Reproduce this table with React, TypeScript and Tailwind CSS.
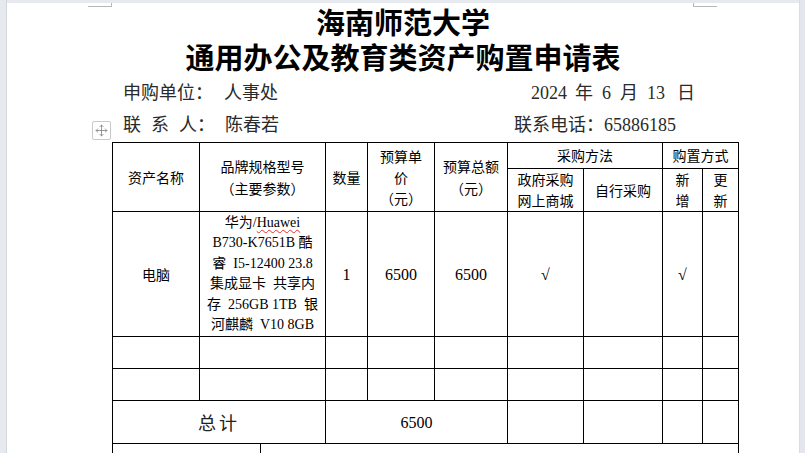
import { Move } from 'lucide-react'

const CJK = { fontFamily: '"Noto Sans CJK SC", sans-serif' }
const MIX = { fontFamily: '"Liberation Serif", "Noto Sans CJK SC", serif' }

const cell = 'border border-black p-0 text-center align-middle'

export default function App() {
  return (
    <div className="w-[805px] h-[453px] overflow-hidden bg-[#e6e9ed] flex text-black">
      <div className="w-[7px] shrink-0 border-r border-[#d3d6da]" />

      {/* page */}
      <div className="relative mt-[3px] w-[792px] shrink-0 bg-white">
        {/* corner marks */}
        <div className="absolute left-[81px] top-[3px] w-[24px] h-[1px] bg-[#b7b7b7]" />
        <div className="absolute left-[104px] top-0 w-[1px] h-[4px] bg-[#b7b7b7]" />
        <div className="absolute left-[686px] top-[3px] w-[24px] h-[1px] bg-[#b7b7b7]" />
        <div className="absolute left-[686px] top-0 w-[1px] h-[4px] bg-[#b7b7b7]" />

        {/* table move handle */}
        <div className="absolute left-[85px] top-[118px] w-[19px] h-[19px] border border-[#c9c9c9] rounded-[2px] bg-white flex items-center justify-center">
          <Move size={13} strokeWidth={1.4} className="text-[#7a7a7a]" />
        </div>

        {/* title */}
        <div className="pt-[1px] text-center font-bold text-[29px] leading-[35px]" style={CJK}>
          <div>海南师范大学</div>
          <div>通用办公及教育类资产购置申请表</div>
        </div>

        {/* info rows */}
        <div className="mt-[3px] pl-[116px] text-[18px] leading-[32px] text-[#2a2a2a]" style={MIX}>
          <div className="flex">
            <div className="w-[408px] shrink-0 flex">
              <span>申购单位：</span>
              <span className="ml-[11px]">人事处</span>
            </div>
            <div className="flex">
              <span>2024</span>
              <span className="ml-[8px]">年</span>
              <span className="ml-[9px]">6</span>
              <span className="ml-[9px]">月</span>
              <span className="ml-[9px]">13</span>
              <span className="ml-[12px]">日</span>
            </div>
          </div>
          <div className="flex">
            <div className="w-[391px] shrink-0 flex">
              <span className="mr-[10px]">联</span>
              <span className="mr-[10px]">系</span>
              <span>人：</span>
              <span className="ml-[10px]">陈春若</span>
            </div>
            <div>联系电话：65886185</div>
          </div>
        </div>

        {/* table */}
        <div className="mt-[1px] ml-[105px]">
          <table className="table-fixed border-collapse w-[627px] text-[14px] leading-[21px]" style={CJK}>
            <colgroup>
              <col className="w-[87px]" />
              <col className="w-[126px]" />
              <col className="w-[42px]" />
              <col className="w-[67px]" />
              <col className="w-[73px]" />
              <col className="w-[76px]" />
              <col className="w-[79px]" />
              <col className="w-[40px]" />
              <col className="w-[36px]" />
            </colgroup>
            <tbody>
              <tr className="h-[26px]">
                <td rowSpan={2} className={cell}>资产名称</td>
                <td rowSpan={2} className={`${cell} leading-[22px]`}>
                  品牌规格型号
                  <br />
                  （主要参数）
                </td>
                <td rowSpan={2} className={cell}>数量</td>
                <td rowSpan={2} className={cell}>
                  预算单
                  <br />
                  价
                  <br />
                  （元）
                </td>
                <td rowSpan={2} className={`${cell} leading-[22px]`}>
                  预算总额
                  <br />
                  （元）
                </td>
                <td colSpan={2} className={cell}>采购方法</td>
                <td colSpan={2} className={cell}>购置方式</td>
              </tr>
              <tr className="h-[43px]">
                <td className={cell}>
                  政府采购
                  <br />
                  网上商城
                </td>
                <td className={cell}>自行采购</td>
                <td className={cell}>
                  新
                  <br />
                  增
                </td>
                <td className={cell}>
                  更
                  <br />
                  新
                </td>
              </tr>

              <tr className="h-[125px]">
                <td className={cell}>电脑</td>
                <td className={`${cell} whitespace-pre leading-[20.5px]`} style={MIX}>
                  <div>
                    华为/<span className="underline decoration-wavy decoration-[#e03030] decoration-1 underline-offset-2">Huawei</span>
                  </div>
                  <div>B730-K7651B 酷</div>
                  <div>睿  I5-12400 23.8</div>
                  <div>集成显卡  共享内</div>
                  <div>存  256GB 1TB  银</div>
                  <div>河麒麟  V10 8GB</div>
                </td>
                <td className={`${cell} text-[16px]`} style={MIX}>1</td>
                <td className={`${cell} text-[16px]`} style={MIX}>6500</td>
                <td className={`${cell} text-[16px]`} style={MIX}>6500</td>
                <td className={`${cell} text-[16px]`} style={MIX}>√</td>
                <td className={cell}></td>
                <td className={`${cell} text-[16px]`} style={MIX}>√</td>
                <td className={cell}></td>
              </tr>

              {[0, 1].map((r) => (
                <tr key={r} className="h-[32px]">
                  {Array.from({ length: 9 }).map((_, i) => (
                    <td key={i} className={cell}></td>
                  ))}
                </tr>
              ))}

              <tr className="h-[43px]">
                <td colSpan={2} className={`${cell} text-[18px] tracking-[3px] text-[#222]`}>总计</td>
                <td colSpan={3} className={`${cell} text-[16px]`} style={MIX}>6500</td>
                <td className={cell}></td>
                <td className={cell}></td>
                <td className={cell}></td>
                <td className={cell}></td>
              </tr>
            </tbody>
          </table>
          <div className="w-[627px] h-[30px] flex border-x border-black">
            <div className="w-[148px] border-r border-black" />
          </div>
        </div>
      </div>

      <div className="flex-1 border-l border-[#d9dce0] bg-[#e3e6ea]" />
    </div>
  )
}
